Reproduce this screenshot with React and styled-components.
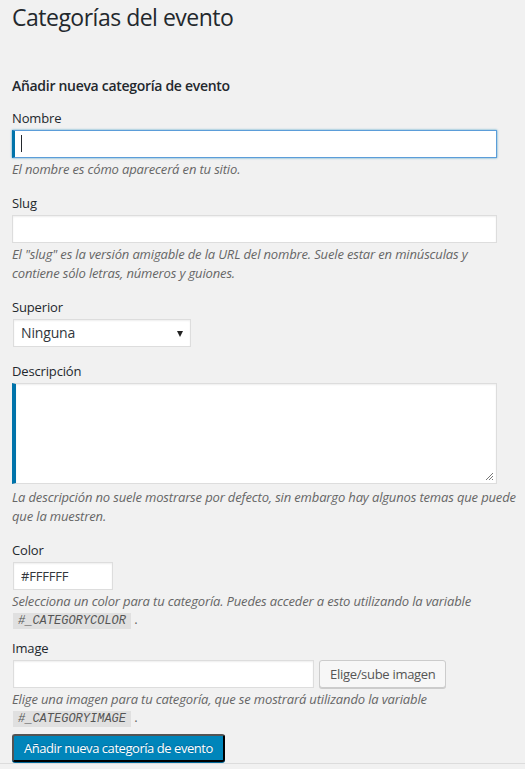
import styled, { createGlobalStyle } from "styled-components";

const GlobalStyle = createGlobalStyle`
  html, body {
    margin: 0;
    background: #f1f1f1;
  }
  body {
    font-family: "Open Sans", "Noto Sans", sans-serif;
    font-size: 13px;
    line-height: 1.4em;
    letter-spacing: -0.15px;
    color: #23282d;
  }
`;

const Page = styled.div`
  padding: 0 2px 1px 12px;
  border-bottom: 1px solid #dcdcdc;
`;

const Title = styled.h1`
  margin: 0;
  padding: 3px 0 0;
  font-size: 23px;
  font-weight: 400;
  line-height: 29px;
  letter-spacing: -0.5px;
`;

const FormTitle = styled.h2`
  margin: 45px 0 14px;
  font-size: 14px;
  font-weight: 600;
  line-height: 18px;
  letter-spacing: -0.3px;
`;

const Field = styled.div`
  margin-bottom: ${p => p.$gap || 15}px;
`;

const Label = styled.label`
  display: block;
  margin-bottom: 2px;
  font-size: 13px;
  line-height: 19px;
`;

const TextInput = styled.input`
  display: block;
  box-sizing: border-box;
  width: ${p => p.$width || "95%"};
  height: 28px;
  margin: 0 0 0 ${p => (p.$inset ? 1 : 0)}px;
  padding: 3px 7px;
  border: 1px solid #ddd;
  box-shadow: inset 0 1px 2px rgba(0, 0, 0, 0.07);
  background: #fff;
  color: #32373c;
  font-family: "Open Sans", sans-serif;
  font-size: 13px;
  letter-spacing: -0.2px;
  outline: none;
`;

const FocusedInput = styled.div`
  box-sizing: border-box;
  width: 95%;
  height: 28px;
  background: #fff;
  border: 1px solid #5b9dd9;
  border-left: 3px solid #0073aa;
  box-shadow: 0 0 2px rgba(30, 140, 190, 0.8);
`;

const Caret = styled.span`
  display: block;
  width: 1px;
  height: 17px;
  margin: 4px 0 0 6px;
  background: #23282d;
`;

const Select = styled.div`
  box-sizing: border-box;
  display: flex;
  align-items: center;
  justify-content: space-between;
  width: 178px;
  height: 28px;
  margin-left: 1px;
  padding: 0 7px;
  border: 1px solid #ddd;
  background: #fff;
  box-shadow: inset 0 1px 2px rgba(0, 0, 0, 0.07);
  font-size: 14px;
  color: #32373c;
`;

const Arrow = styled.span`
  width: 0;
  height: 0;
  margin-top: 1px;
  border-left: 3.5px solid transparent;
  border-right: 3.5px solid transparent;
  border-top: 6px solid #222;
`;

const TextArea = styled.div`
  position: relative;
  box-sizing: border-box;
  width: 95%;
  height: 101px;
  margin-bottom: 4px;
  background: #fff;
  border: 1px solid #ddd;
  border-left: 4px solid #0073aa;
  box-shadow: inset 0 1px 2px rgba(0, 0, 0, 0.07);
`;

const Grip = styled.svg`
  position: absolute;
  right: 2px;
  bottom: 2px;
`;

const Help = styled.p`
  margin: 2px 0 0;
  font-size: 13px;
  font-style: italic;
  line-height: 19px;
  color: #666;
`;

const CodeLine = styled.div`
  font-size: 13px;
  line-height: 16px;
  color: #666;
`;

const Code = styled.code`
  display: inline-block;
  margin-left: 1px;
  padding: 0 5px;
  background: rgba(0, 0, 0, 0.07);
  font-family: "Liberation Mono", "DejaVu Sans Mono", monospace;
  font-size: 12px;
  font-style: italic;
  line-height: 16px;
  letter-spacing: 0;
  color: #555;
`;

const Row = styled.div`
  display: flex;
  align-items: center;
  gap: 5px;
`;

const Button = styled.button`
  box-sizing: border-box;
  height: 28px;
  padding: 0 10px 1px;
  border: 1px solid ${p => (p.$primary ? "#0073aa #006799 #006799" : "#ccc")};
  border-radius: 3px;
  background: ${p => (p.$primary ? "#0085ba" : "#f7f7f7")};
  box-shadow: ${p => (p.$primary ? "0 1px 0 #006799" : "0 1px 0 #ccc")};
  color: ${p => (p.$primary ? "#fff" : "#555")};
  font-family: "Open Sans", sans-serif;
  font-size: 13px;
  letter-spacing: ${p => (p.$primary ? -0.45 : -0.3)}px;
  white-space: nowrap;
  text-shadow: ${p => (p.$primary ? "0 -1px 1px #006799" : "none")};
`;

export default function App() {
  return (
    <>
      <GlobalStyle />
      <Page>
        <Title>Categorías del evento</Title>
        <FormTitle>Añadir nueva categoría de evento</FormTitle>

        <Field>
          <Label>Nombre</Label>
          <FocusedInput>
            <Caret />
          </FocusedInput>
          <Help>El nombre es cómo aparecerá en tu sitio.</Help>
        </Field>

        <Field>
          <Label>Slug</Label>
          <TextInput />
          <Help>
            El "slug" es la versión amigable de la URL del nombre. Suele estar en minúsculas y
            <br />
            contiene sólo letras, números y guiones.
          </Help>
        </Field>

        <Field>
          <Label>Superior</Label>
          <Select>
            Ninguna
            <Arrow />
          </Select>
        </Field>

        <Field>
          <Label>Descripción</Label>
          <TextArea>
            <Grip width="9" height="9" viewBox="0 0 9 9">
              <path d="M8 1L1 8M8 4L4 8M8 7L7 8" stroke="#777" strokeWidth="1" />
            </Grip>
          </TextArea>
          <Help>
            La descripción no suele mostrarse por defecto, sin embargo hay algunos temas que puede
            <br />
            que la muestren.
          </Help>
        </Field>

        <Field $gap={10}>
          <Label>Color</Label>
          <TextInput $width="100px" $inset defaultValue="#FFFFFF" />
          <Help>Selecciona un color para tu categoría. Puedes acceder a esto utilizando la variable</Help>
          <CodeLine>
            <Code>#_CATEGORYCOLOR</Code> .
          </CodeLine>
        </Field>

        <Field $gap={7}>
          <Label>Image</Label>
          <Row>
            <TextInput $width="301px" $inset />
            <Button>Elige/sube imagen</Button>
          </Row>
          <Help>Elige una imagen para tu categoría, que se mostrará utilizando la variable</Help>
          <CodeLine>
            <Code>#_CATEGORYIMAGE</Code> .
          </CodeLine>
        </Field>

        <Button $primary>Añadir nueva categoría de evento</Button>
      </Page>
    </>
  );
}
